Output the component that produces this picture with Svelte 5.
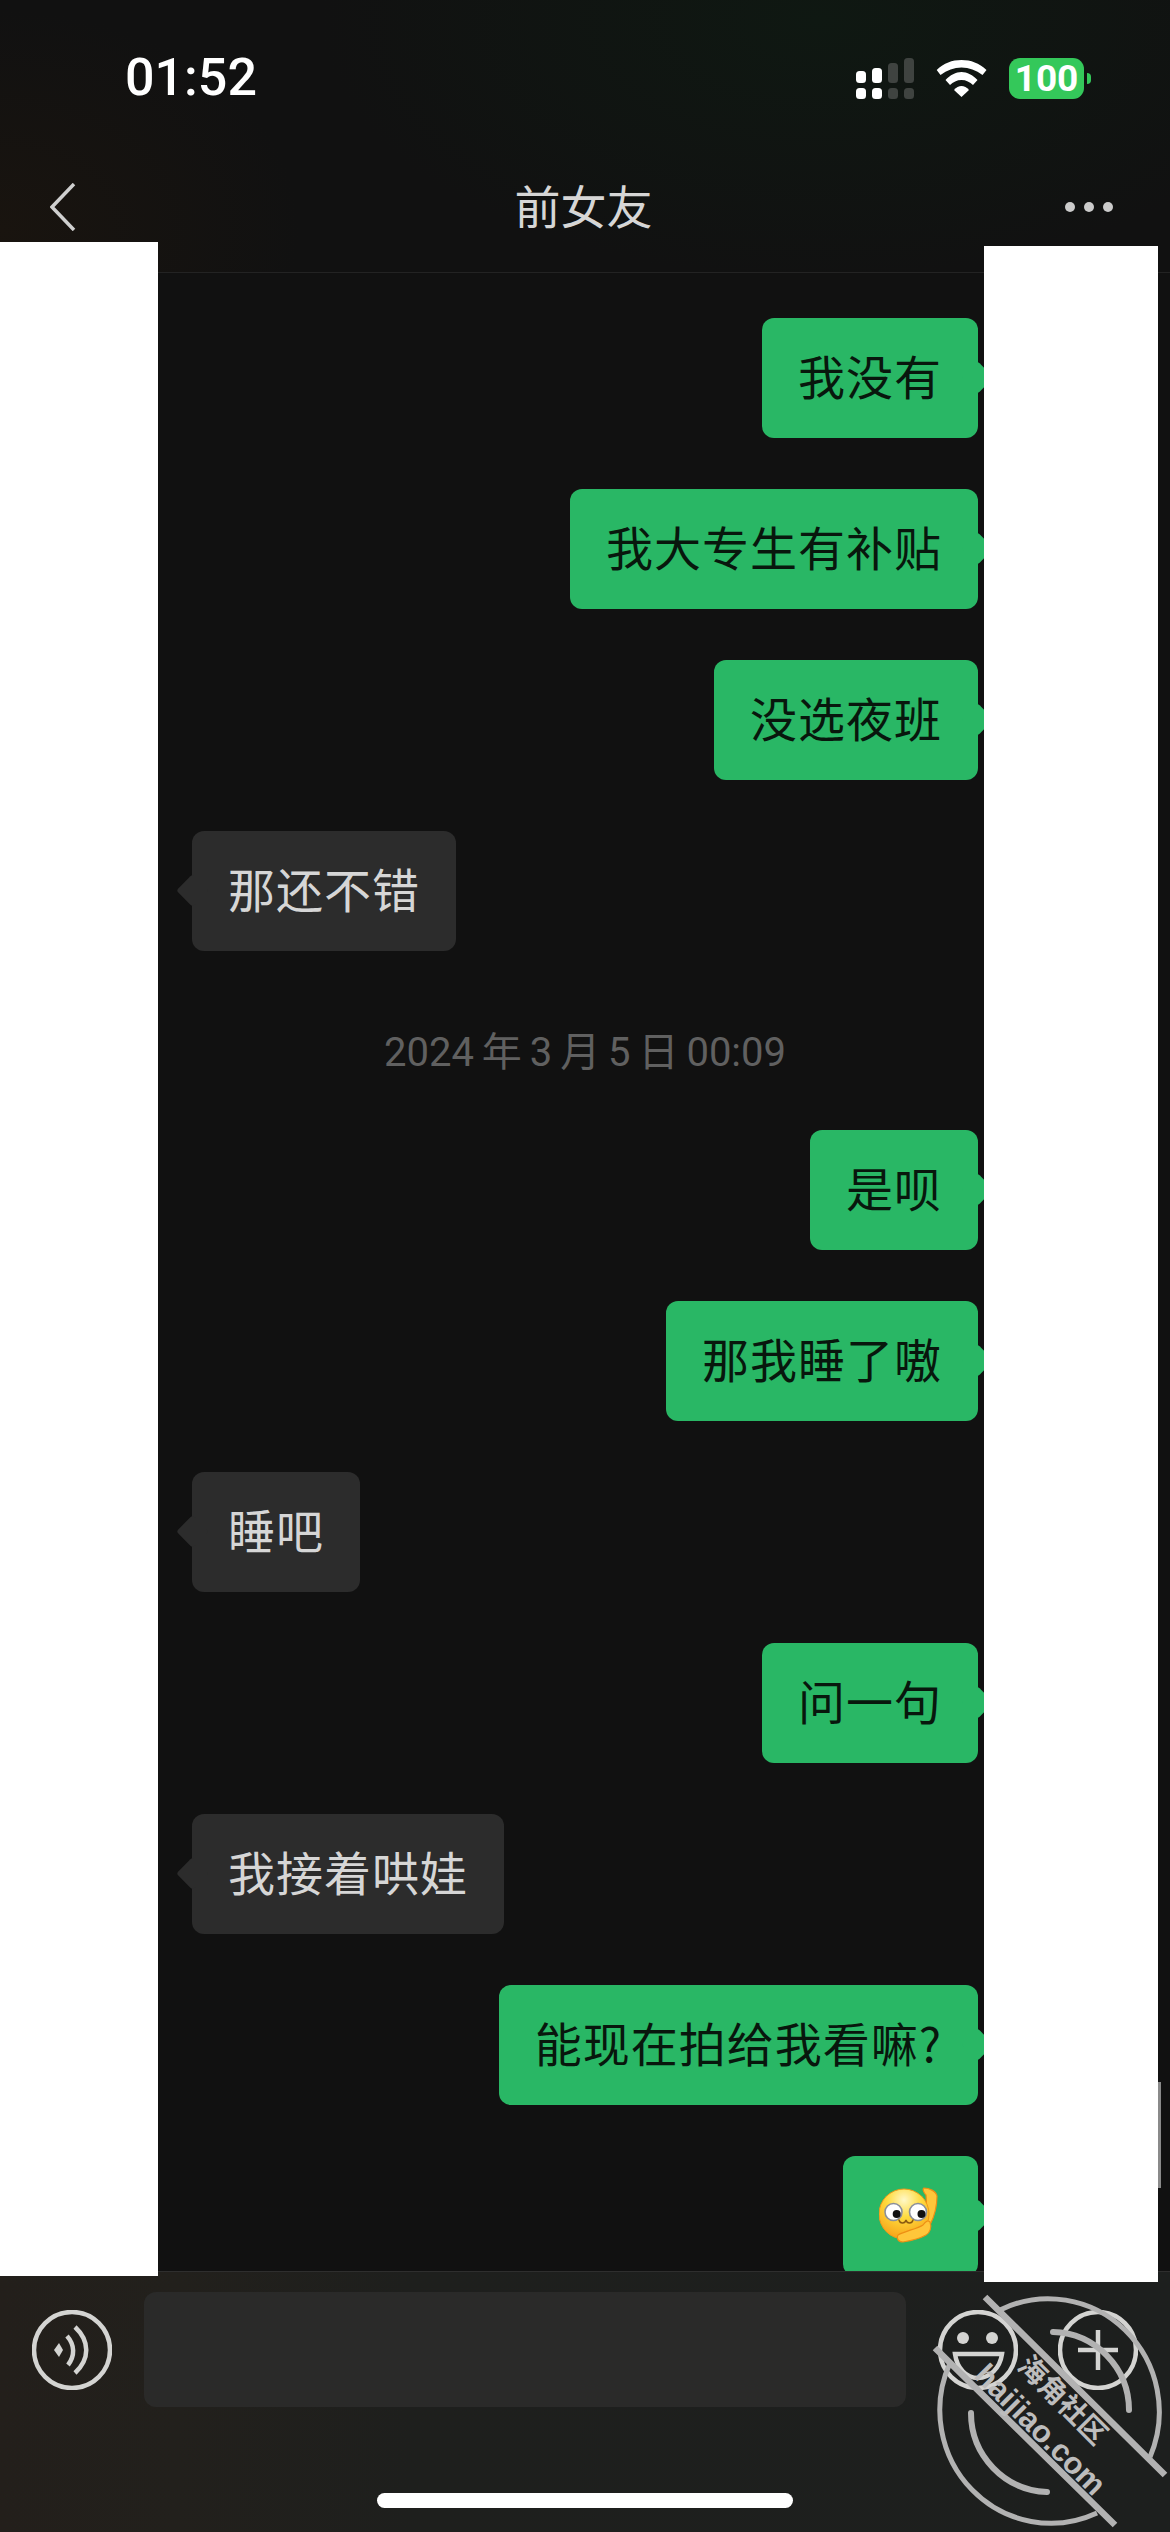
<script>
	// chat log, top to bottom. side: me | them | time
	const messages = [
		{ side: 'me', text: '我没有' },
		{ side: 'me', text: '我大专生有补贴' },
		{ side: 'me', text: '没选夜班' },
		{ side: 'them', text: '那还不错' },
		{ side: 'time', text: '2024 年 3 月 5 日 00:09' },
		{ side: 'me', text: '是呗' },
		{ side: 'me', text: '那我睡了嗷' },
		{ side: 'them', text: '睡吧' },
		{ side: 'me', text: '问一句' },
		{ side: 'them', text: '我接着哄娃' },
		{ side: 'me', text: '能现在拍给我看嘛?' }
	];

	const signal = [
		{ x: 0, h: 12, on: true },
		{ x: 16, h: 15, on: true },
		{ x: 32, h: 20, on: false },
		{ x: 48, h: 25, on: false }
	];
</script>

<div class="phone">
	<header class="top">
		<div class="status">
			<span class="clock">01:52</span>
			<div class="indicators">
				<svg class="signal" width="58" height="41" viewBox="0 0 58 41">
					{#each signal as bar}
						<rect x={bar.x} y={25 - bar.h} width="10" height={bar.h} rx="3.5" fill={bar.on ? '#fff' : '#3f4340'} />
						<rect x={bar.x} y="30" width="10" height="11" rx="3.5" fill={bar.on ? '#fff' : '#3f4340'} />
					{/each}
				</svg>
				<svg width="51" height="37" viewBox="0 0 51 37" fill="#fff">
					<path d="M.7 10C8 3 16 0 25.5 0S43 3 50.5 10l-4 5C40 10 33 7.5 25.5 7.5S11 10 4.5 15Z" />
					<path d="M9.5 20C14 15 20 12 25.5 12S37 15 41.5 20L37 25C34 22 30 20 25.5 20S17 22 14 25Z" />
					<path d="M18 30C20 27.5 23 26 25.5 26S31 27.5 33 30L25.5 37Z" />
				</svg>
				<div class="battery"><span class="level">100</span><span class="nub"></span></div>
			</div>
		</div>
		<nav class="nav">
			<svg class="back" width="26" height="48" viewBox="0 0 26 48" fill="none" stroke="#cfcfcf" stroke-width="3.5">
				<path d="M24 1 2 24l22 23" />
			</svg>
			<h1>前女友</h1>
			<div class="more"><i></i><i></i><i></i></div>
		</nav>
	</header>

	<main class="log">
		{#each messages as m}
			{#if m.side === 'time'}
				<div class="stamp">{m.text}</div>
			{:else}
				<div class="row {m.side}"><div class="bubble">{m.text}</div></div>
			{/if}
		{/each}
		<div class="row me">
			<div class="bubble sticker">
				<svg width="63" height="58" viewBox="0 0 63 58">
					<defs>
						<radialGradient id="face" cx="50%" cy="22%" r="85%">
							<stop offset="0" stop-color="#fff8c8" />
							<stop offset="0.4" stop-color="#ffdb3e" />
							<stop offset="1" stop-color="#f59a12" />
						</radialGradient>
					</defs>
					<path d="M45 1C50 1 57 4 58 9 58 20 55 30 51 38L44 36C47 26 48 16 47 8 45 6 43 2 45 1Z" fill="#ffc63a" stroke="#ee8f14" stroke-width="1.2" />
					<circle cx="25" cy="27" r="25" fill="url(#face)" stroke="#f09a18" stroke-width="1" />
					<circle cx="14.5" cy="25" r="8.5" fill="#fff" stroke="#8a8f9a" stroke-width="1.6" />
					<circle cx="39" cy="25" r="8.5" fill="#fff" stroke="#8a8f9a" stroke-width="1.6" />
					<circle cx="17.7" cy="27" r="4" fill="#111" />
					<circle cx="42.5" cy="27" r="4" fill="#111" />
					<path d="M20 33c1 4 6 4 7 0 1 4 6 4 7 0" fill="none" stroke="#8a5a10" stroke-width="1.4" stroke-linecap="round" />
					<path d="M19 48C26 44 38 42 44 38 47 34 49 33 51 35 53 40 51 46 47 48 40 52 30 54 24 55 19 55 17 51 19 48Z" fill="#ffc63a" stroke="#ee8f14" stroke-width="1.2" />
				</svg>
			</div>
		</div>
	</main>

	<footer class="bar">
		<div class="controls">
			<svg class="round" width="80" height="80" viewBox="0 0 80 80" fill="none" stroke="#d4d4d2" stroke-width="4.5">
				<circle cx="40" cy="40" r="38" />
				<path d="M22 40l5-7 4 7-4 7Z" fill="#d4d4d2" stroke="none" />
				<path d="M35 26c8 9 8 20 1 29" />
				<path d="M43 17c15 14 15 32 0 46" />
			</svg>
			<div class="field"></div>
			<svg class="round" width="80" height="80" viewBox="0 0 80 80" fill="none" stroke="#d4d4d2" stroke-width="4.5">
				<circle cx="40" cy="40" r="38" />
				<circle cx="25" cy="28" r="6" fill="#d4d4d2" stroke="none" />
				<circle cx="54" cy="28" r="6" fill="#d4d4d2" stroke="none" />
				<path d="M17 44H64C62 58 52 68 40 68S19 58 17 44Z" />
			</svg>
			<svg class="round plus" width="80" height="80" viewBox="0 0 80 80" fill="none" stroke="#d4d4d2" stroke-width="4.5">
				<circle cx="40" cy="40" r="38" />
				<path d="M20 40H60M40 20V60" />
			</svg>
		</div>
		<div class="home"></div>
	</footer>

	<div class="patch left"></div>
	<div class="patch right"></div>
	<div class="scroll"></div>

	<svg class="mark" width="250" height="252" viewBox="920 2280 250 252" fill="none" stroke="#b2b2b2" stroke-width="5">
		<path d="M1000 2310A111 113 0 0 1 1150 2457" />
		<path d="M950 2363A111 113 0 0 0 1097 2513" />
		<path d="M1053 2332A78 78 0 0 1 1129 2410" stroke-width="6" stroke-linecap="round" />
		<path d="M971 2413A79 79 0 0 0 1047 2492" stroke-width="6" stroke-linecap="round" />
		<path d="M985 2297 1165 2475M935 2348 1115 2525" stroke-width="6.5" />
		<text class="mark-cn" x="1063" y="2410" transform="rotate(45 1063 2400)">海角社区</text>
		<text class="mark-en" x="1040" y="2440" transform="rotate(45 1040 2430)">haijiao.com</text>
	</svg>
</div>

<style>
	:global(body) { margin: 0; background: #111; }
	.phone {
		position: relative;
		width: 1170px;
		height: 2532px;
		overflow: hidden;
		display: flex;
		flex-direction: column;
		background: #111;
		font-family: "Noto Sans CJK SC", "Noto Sans", sans-serif;
	}

	.top {
		flex: none;
		height: 272px;
		border-bottom: 1px solid #232323;
		background:
			radial-gradient(500px 260px at 820px 20px, #0f1812, transparent),
			radial-gradient(300px 220px at 0 230px, #19140f, transparent),
			#111;
	}
	.status {
		height: 156px;
		padding: 0 79px 0 127px;
		display: flex;
		align-items: center;
		justify-content: space-between;
	}
	.clock { font: 500 52px/1 Roboto, sans-serif; color: #fff; margin-left: -2px; }
	.indicators { display: flex; align-items: center; gap: 22px; }
	.signal { display: block; }
	.battery {
		position: relative;
		width: 75px;
		height: 41px;
		margin-right: 7px;
		border-radius: 11px;
		background: #34c85a;
		display: flex;
		align-items: center;
		justify-content: center;
	}
	.level { font: 700 37px/1 Roboto, sans-serif; color: #fff; }
	.nub {
		position: absolute;
		left: 78px;
		top: 15px;
		width: 4px;
		height: 11px;
		border-radius: 0 6px 6px 0;
		background: #34c85a;
	}

	.nav {
		height: 102px;
		padding: 0 57px 14px 50px;
		display: grid;
		grid-template-columns: 1fr auto 1fr;
		align-items: center;
	}
	.back { display: block; }
	h1 {
		margin: 0 0 0 4px;
		padding-bottom: 6px;
		font-size: 46px;
		font-weight: 400;
		line-height: 1;
		color: #d6d6d6;
	}
	.more { justify-self: end; display: flex; gap: 9px; }
	.more i { width: 10px; height: 10px; border-radius: 50%; background: #cbcbcb; }

	.log {
		flex: 1;
		min-height: 0;
		overflow: hidden;
		padding: 45px 192px 0 192px;
		display: flex;
		flex-direction: column;
		gap: 51px;
	}
	.row { display: flex; flex: none; }
	.row.me { justify-content: flex-end; }
	.row.them { justify-content: flex-start; }
	.bubble {
		position: relative;
		padding: 33px 36px 39px;
		border-radius: 12px;
		font-size: 47px;
		letter-spacing: 1px;
		line-height: 48px;
		white-space: nowrap;
	}
	.bubble::after {
		content: "";
		position: absolute;
		top: 48px;
		width: 23px;
		height: 23px;
		border-radius: 3px;
		background: inherit;
		transform: rotate(45deg);
	}
	.me .bubble { background: #29b765; color: #08170d; }
	.me .bubble::after { right: -11px; }
	.them .bubble { background: #2c2c2c; color: #d6d6d6; }
	.them .bubble::after { left: -11px; }
	.bubble.sticker { padding: 31px 36px; }
	.sticker svg { display: block; }
	.stamp {
		flex: none;
		padding-top: 23px;
		height: 54px;
		font-family: Roboto, "Noto Sans CJK SC", sans-serif;
		font-size: 40px;
		line-height: 55px;
		color: #606060;
		text-align: center;
		word-spacing: -2px;
	}

	.bar {
		flex: none;
		box-sizing: border-box;
		height: 261px;
		border-top: 1px solid #2e2e2e;
		padding-top: 20px;
		display: flex;
		flex-direction: column;
		align-items: center;
		background: linear-gradient(90deg, #231f1b 0, #22201c 15%, #1e1f1d 35%, #1d1f1e 100%);
	}
	.controls {
		width: 100%;
		box-sizing: border-box;
		padding-left: 32px;
		display: flex;
		align-items: center;
		gap: 32px;
	}
	.round { flex: none; display: block; }
	.plus { margin-left: 8px; }
	.field { width: 762px; height: 115px; border-radius: 12px; background: #2a2a29; }
	.home { width: 416px; height: 15px; margin-top: 86px; border-radius: 8px; background: #fff; }

	/* redaction blocks pasted on top of the screenshot */
	.patch { position: absolute; background: #fff; }
	.patch.left { left: 0; top: 242px; width: 158px; height: 2034px; }
	.patch.right { left: 984px; top: 246px; width: 174px; height: 2036px; }
	.scroll {
		position: absolute;
		left: 1158px;
		top: 2082px;
		width: 3px;
		height: 106px;
		background: #8a8a8a;
	}
	.mark { position: absolute; left: 920px; top: 2280px; }
	.mark text { fill: #bdbdbd; stroke: none; text-anchor: middle; font-weight: 700; }
	.mark-cn { font-size: 28px; font-family: "Noto Sans CJK SC", sans-serif; }
	.mark-en { font-size: 31px; font-family: "Liberation Sans", sans-serif; }
</style>
